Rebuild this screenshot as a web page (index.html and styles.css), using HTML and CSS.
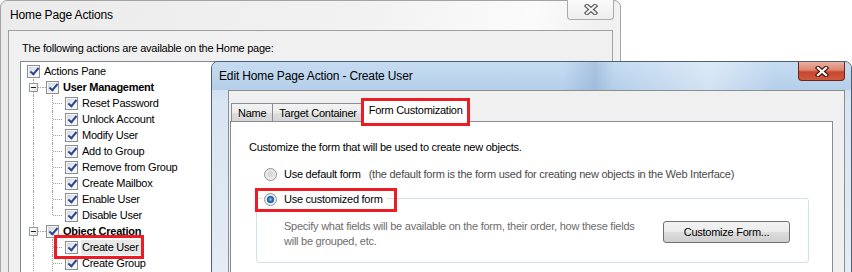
FILE: index.html
```html
<!DOCTYPE html>
<html lang="en">
<head>
    <meta charset="UTF-8">
    <title>Home Page Actions</title>
    <link rel="stylesheet" href="styles.css">
</head>
<body>

<div class="desktop">

    <!-- back window -->
    <div class="window back-window">
        <div class="titlebar">
            <span class="title">Home Page Actions</span>
            <span class="close-btn close-inactive">
                <svg width="14" height="11" viewBox="0 0 14 11">
                    <path d="M3 2 L11 9 M11 2 L3 9" stroke="#5c5c5c" stroke-width="4.5" stroke-linecap="square"/>
                    <path d="M3 2 L11 9 M11 2 L3 9" stroke="#f4f4f4" stroke-width="2.2" stroke-linecap="square"/>
                </svg>
            </span>
        </div>
        <div class="client">
            <p class="intro">The following actions are available on the Home page:</p>
            <div class="tree">
                <div class="node">
                    <span class="cell"><span class="cb"></span></span>
                    <span class="label">Actions Pane</span>
                </div>
                <div class="node">
                    <span class="cell g-tee"><span class="exp"></span></span>
                    <span class="cell lead"><span class="cb"></span></span>
                    <span class="label bold">User Management</span>
                </div>
                <div class="node">
                    <span class="cell g-pipe"></span><span class="cell g-tee"></span>
                    <span class="cell"><span class="cb"></span></span>
                    <span class="label">Reset Password</span>
                </div>
                <div class="node">
                    <span class="cell g-pipe"></span><span class="cell g-tee"></span>
                    <span class="cell"><span class="cb"></span></span>
                    <span class="label">Unlock Account</span>
                </div>
                <div class="node">
                    <span class="cell g-pipe"></span><span class="cell g-tee"></span>
                    <span class="cell"><span class="cb"></span></span>
                    <span class="label">Modify User</span>
                </div>
                <div class="node">
                    <span class="cell g-pipe"></span><span class="cell g-tee"></span>
                    <span class="cell"><span class="cb"></span></span>
                    <span class="label">Add to Group</span>
                </div>
                <div class="node">
                    <span class="cell g-pipe"></span><span class="cell g-tee"></span>
                    <span class="cell"><span class="cb"></span></span>
                    <span class="label">Remove from Group</span>
                </div>
                <div class="node">
                    <span class="cell g-pipe"></span><span class="cell g-tee"></span>
                    <span class="cell"><span class="cb"></span></span>
                    <span class="label">Create Mailbox</span>
                </div>
                <div class="node">
                    <span class="cell g-pipe"></span><span class="cell g-tee"></span>
                    <span class="cell"><span class="cb"></span></span>
                    <span class="label">Enable User</span>
                </div>
                <div class="node">
                    <span class="cell g-pipe"></span><span class="cell g-end"></span>
                    <span class="cell"><span class="cb"></span></span>
                    <span class="label">Disable User</span>
                </div>
                <div class="node">
                    <span class="cell g-tee"><span class="exp"></span></span>
                    <span class="cell lead"><span class="cb"></span></span>
                    <span class="label bold">Object Creation</span>
                </div>
                <div class="node">
                    <span class="cell g-pipe"></span><span class="cell g-tee"></span>
                    <span class="mark hl hl-item">
                        <span class="cell"><span class="cb"></span></span>
                        <span class="label selected">Create User</span>
                    </span>
                </div>
                <div class="node">
                    <span class="cell g-pipe"></span><span class="cell g-tee"></span>
                    <span class="cell"><span class="cb"></span></span>
                    <span class="label">Create Group</span>
                </div>
            </div>
        </div>
    </div>

    <!-- front window -->
    <div class="window front-window">
        <div class="titlebar">
            <span class="title">Edit Home Page Action - Create User</span>
            <span class="close-btn close-active">
                <svg width="14" height="11" viewBox="0 0 14 11">
                    <path d="M3 2 L11 9 M11 2 L3 9" stroke="#4a1810" stroke-width="4.5" stroke-linecap="square"/>
                    <path d="M3 2 L11 9 M11 2 L3 9" stroke="#ffffff" stroke-width="2.2" stroke-linecap="square"/>
                </svg>
            </span>
        </div>
        <div class="client">
            <div class="tabs">
                <span class="tab">Name</span>
                <span class="tab">Target Container</span>
                <span class="tab active hl hl-tab">Form Customization</span>
            </div>
            <div class="panel">
                <p class="lead-text">Customize the form that will be used to create new objects.</p>
                <div class="options">
                    <div class="option">
                        <span class="radio"></span>
                        <span class="opt-label">Use default form</span>
                        <span class="hint">(the default form is the form used for creating new objects in the Web Interface)</span>
                    </div>
                    <div class="group">
                        <div class="group-head hl hl-radio">
                            <span class="radio on"></span>
                            <span class="opt-label">Use customized form</span>
                        </div>
                        <div class="group-body">
                            <p class="desc">Specify what fields will be available on the form, their order, how these fields<br>will be grouped, etc.</p>
                            <button class="btn">Customize Form...</button>
                        </div>
                    </div>
                </div>
            </div>
        </div>
    </div>

</div>

</body>
</html>
```

FILE: styles.css
```css
body {
    margin: 0;
    background: #fff;
    font-family: 'Liberation Sans', Arial, sans-serif;
    font-size: 11px;
    letter-spacing: -0.25px;
    color: #000;
    overflow: hidden;
}

p {
    margin: 0;
}

.desktop {
    position: relative;
    width: 852px;
    height: 272px;
    overflow: hidden;
}

/* Windows */
.window {
    position: absolute;
    box-sizing: border-box;
    border: 1px solid #7d7d7d;
    border-radius: 7px 7px 0 0;
}

.back-window {
    left: 0;
    top: 0;
    width: 621px;
    height: 300px;
    border-color: #a4a4a4;
    background: linear-gradient(100deg, #ebebeb 0, #f2f2f2 55%, #fbfbfb 80%, #f0f0f0 90%, #f5f5f5 100%);
}

.front-window {
    left: 211px;
    top: 61px;
    width: 641px;
    height: 240px;
    border-color: #4f5f74;
    background: linear-gradient(#c3d9ef 0, #d8e5f2 40px, #e6edf5 100%);
}

.titlebar {
    display: flex;
    align-items: flex-start;
}

.back-window .titlebar {
    height: 29px;
    padding: 0 6px 0 9px;
}

.front-window .titlebar {
    height: 28px;
    padding: 0 6px 0 7px;
    border-radius: 6px 6px 0 0;
    background:
        linear-gradient(90deg, rgba(255,255,255,0) 0, rgba(255,255,255,0) 55%, rgba(110,145,185,0.3) 60%, rgba(255,255,255,0) 63%, rgba(255,255,255,0.4) 78%, rgba(255,255,255,0) 88%),
        linear-gradient(#c6dcf2, #b5cfea);
}

.title {
    font-size: 12px;
    letter-spacing: -0.15px;
}

.back-window .title {
    line-height: 29px;
}

.front-window .title {
    line-height: 28px;
}

.close-btn {
    margin-left: auto;
    width: 47px;
    height: 19px;
    box-sizing: border-box;
    border-radius: 0 0 4px 4px;
    display: flex;
    align-items: center;
    justify-content: center;
}

.close-inactive {
    height: 20px;
    margin-top: -1px;
    border: 1px solid #ababab;
    border-top: 0;
    background: linear-gradient(#fafafa, #eeeeee);
}

.close-active {
    border: 1px solid #6a2418;
    border-top: 0;
    background: linear-gradient(#eab0a2 0, #dc8572 45%, #c8462f 55%, #d0593e 100%);
}

.client {
    box-sizing: border-box;
    background: #f0f0f0;
    border: 1px solid #a0a0a0;
    height: 300px;
}

.back-window .client {
    margin: 0 7px;
}

.front-window .client {
    margin: 0 6px 0 16px;
    border-color: #8e8e8e;
}

/* Tree */
.intro {
    padding: 9px 0 0 13px;
    line-height: 16px;
}

.tree {
    margin: 5px 0 0 11px;
    width: 200px;
    height: 240px;
    box-sizing: border-box;
    border: 1px solid #828790;
    background: #fff;
    padding: 1px 0 0 3px;
}

.node {
    display: flex;
    align-items: center;
    height: 16px;
}

.mark {
    display: inline-flex;
    align-items: center;
    height: 16px;
}

.cell {
    position: relative;
    width: 19px;
    height: 16px;
    flex: none;
    display: flex;
    align-items: center;
    justify-content: center;
}

.g-pipe::before,
.g-tee::before,
.g-end::before {
    content: "";
    position: absolute;
    left: 9px;
    top: 0;
    bottom: 0;
    border-left: 1px dotted #a0a0a0;
}

.g-end::before {
    bottom: 8px;
}

.g-tee::after,
.g-end::after {
    content: "";
    position: absolute;
    left: 10px;
    right: 0;
    top: 8px;
    border-top: 1px dotted #a0a0a0;
}

.lead::after {
    content: "";
    position: absolute;
    left: 0;
    width: 3px;
    top: 8px;
    border-top: 1px dotted #a0a0a0;
}

.exp {
    position: relative;
    z-index: 1;
    width: 9px;
    height: 9px;
    box-sizing: border-box;
    border: 1px solid #919aa6;
    background: linear-gradient(135deg, #fff 30%, #dcdcdc);
    display: flex;
    align-items: center;
    justify-content: center;
}

.exp::after {
    content: "";
    width: 5px;
    height: 1px;
    background: #1e1e1e;
}

.cb {
    position: relative;
    width: 13px;
    height: 13px;
    box-sizing: border-box;
    border: 1px solid #8e8f8f;
    background: linear-gradient(135deg, #cfd3d8 0, #eef0f2 60%, #fbfbfb 100%);
    box-shadow: inset 0 0 0 1px #f6f6f6;
}

.cb::after {
    content: "";
    position: absolute;
    left: 4px;
    top: 0;
    width: 3px;
    height: 7px;
    border: solid #2b4690;
    border-width: 0 2px 2px 0;
    transform: rotate(40deg);
}

.label {
    padding: 0 2px 0 1px;
    line-height: 15px;
    white-space: nowrap;
}

.label.bold {
    font-weight: bold;
}

.label.selected {
    background: #e8e8e8;
}

/* Red highlight boxes */
.hl {
    position: relative;
}

.hl::after {
    content: "";
    position: absolute;
    border: 3px solid #ec1c24;
    pointer-events: none;
    z-index: 2;
}

.hl-item::after {
    left: -8px;
    right: -3px;
    top: -4px;
    bottom: -4px;
}

.hl-tab::after {
    left: -3px;
    right: -2px;
    top: -2px;
    bottom: -4px;
}

.hl-radio::after {
    left: -7px;
    right: -10px;
    top: -3px;
    bottom: -5px;
}

/* Tabs */
.tabs {
    display: flex;
    align-items: flex-end;
    height: 30px;
    padding-left: 2px;
}

.tab {
    height: 18px;
    box-sizing: border-box;
    border: 1px solid #898c95;
    border-bottom: 0;
    padding: 0 6px;
    line-height: 18px;
    margin-right: -1px;
    background: linear-gradient(#f3f3f3, #ebebeb 50%, #dedede 50%, #d5d5d5);
}

.tab.active {
    height: 23px;
    margin-bottom: -1px;
    margin-left: 0;
    padding: 0 5px;
    line-height: 21px;
    background: #fff;
    z-index: 1;
}

.panel {
    position: relative;
    height: 200px;
    box-sizing: border-box;
    margin: 0 11px 0 1px;
    padding: 18px 0 0 18px;
    border: 1px solid #898c95;
    background: #fff;
}

.lead-text {
    line-height: 15px;
}

.options {
    margin: 11px 23px 0 7px;
}

.option {
    display: flex;
    align-items: center;
    height: 16px;
    padding-left: 8px;
}

.radio {
    position: relative;
    width: 13px;
    height: 13px;
    flex: none;
    box-sizing: border-box;
    border-radius: 50%;
    border: 1px solid #8e8f8f;
    background: radial-gradient(circle at 50% 45%, #d2d2d2 0, #e4e4e4 45%, #f6f6f6 75%, #ffffff 100%);
}

.radio.on::after {
    content: "";
    position: absolute;
    left: 2px;
    top: 2px;
    width: 7px;
    height: 7px;
    border-radius: 50%;
    background: radial-gradient(circle at 50% 50%, #8fd0ff 0, #2f86cf 35%, #0e3f75 75%, #0a2b55 100%);
}

.opt-label {
    margin-left: 7px;
    white-space: nowrap;
}

.hint {
    margin-left: 8px;
    color: #4a4a4a;
    white-space: nowrap;
}

.group {
    margin-top: 16px;
    border: 1px solid #d5dfe5;
    border-radius: 3px;
}

.group-head {
    display: inline-flex;
    align-items: center;
    height: 16px;
    margin: -8px 0 0 5px;
    padding: 0 4px 0 2px;
    background: #fff;
    vertical-align: top;
}

.group-body {
    display: flex;
    justify-content: space-between;
    align-items: flex-start;
    padding: 8px 18px 13px 27px;
}

.desc {
    color: #6d6d6d;
    line-height: 15px;
    white-space: nowrap;
}

.btn {
    margin-top: 2px;
    width: 127px;
    height: 22px;
    box-sizing: border-box;
    border: 1px solid #707070;
    border-radius: 3px;
    background: linear-gradient(#f2f2f2 0, #ebebeb 50%, #dddddd 50%, #cfcfcf 100%);
    font-family: 'Liberation Sans', Arial, sans-serif;
    font-size: 11px;
    letter-spacing: -0.25px;
    color: #000;
    padding: 0;
}
```
